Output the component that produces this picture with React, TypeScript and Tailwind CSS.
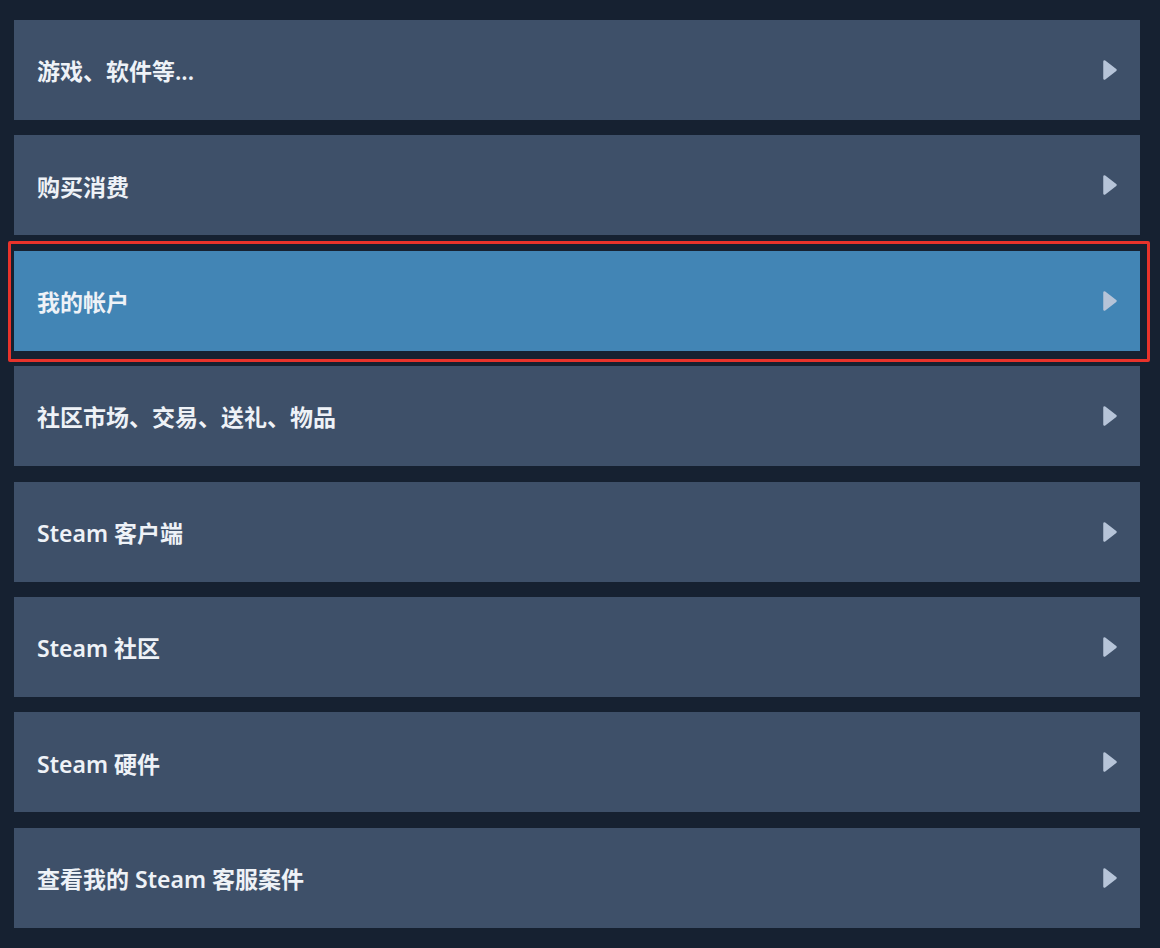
const items = [
  '游戏、软件等...',
  '购买消费',
  '我的帐户',
  '社区市场、交易、送礼、物品',
  'Steam 客户端',
  'Steam 社区',
  'Steam 硬件',
  '查看我的 Steam 客服案件',
];

function Arrow() {
  return (
    <svg width="16" height="22" viewBox="0 0 16 22" className="shrink-0">
      <path d="M2.5 2.5 L13.5 11 L2.5 19.5 Z" fill="#b6c4d8" stroke="#b6c4d8" strokeWidth="2.5" strokeLinejoin="round" />
    </svg>
  );
}

export default function App() {
  return (
    <div
      className="w-[1160px] h-[948px] bg-[#162131] pt-[20px] pl-[14px] pr-[20px] flex flex-col gap-[15.4px] overflow-hidden"
      style={{ fontFamily: '"Noto Sans", "Noto Sans CJK SC", sans-serif' }}
    >
      {items.map((label, i) => {
        const active = i === 2;
        return (
          <div key={label} className={active ? 'relative' : ''}>
            {active && (
              <div className="absolute -left-[6px] -right-[10px] -top-[10px] -bottom-[11px] border-[3px] border-[#e8332b] rounded-[2px]" />
            )}
            <div
              className={`h-[100px] flex items-center justify-between pl-[23px] pr-[22px] ${
                active ? 'bg-[#4285b5]' : 'bg-[#3e5069]'
              }`}
            >
              <span className="text-[23px] font-semibold text-[#eef2f7] pt-[3px]">{label}</span>
              <Arrow />
            </div>
          </div>
        );
      })}
    </div>
  );
}
